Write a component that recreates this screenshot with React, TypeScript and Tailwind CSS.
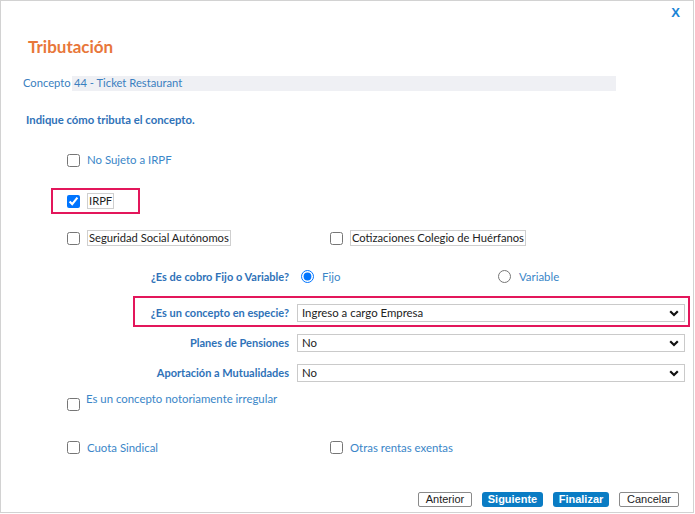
import React from "react";

const RED = "border-[#e3165b]";

function Chevron() {
  return (
    <svg
      width="10"
      height="7"
      viewBox="0 0 10 7"
      className="pointer-events-none absolute right-[6px] top-[6px]"
    >
      <path d="M1.2 1.2 L5 5 L8.8 1.2" stroke="#111" strokeWidth="2.2" fill="none" />
    </svg>
  );
}

function Select({ value }: { value: string }) {
  return (
    <div className="relative w-[388px] h-[18px] flex-none">
      <select
        defaultValue={value}
        className="block appearance-none w-full h-[18px] border border-[#cacaca] bg-white pl-[4px] py-0 text-[11.4px] leading-[16px] text-[#222] outline-none rounded-none"
      >
        <option>{value}</option>
      </select>
      <Chevron />
    </div>
  );
}

function Check({ checked = false }: { checked?: boolean }) {
  return (
    <input
      type="checkbox"
      defaultChecked={checked}
      className="m-0 w-[13px] h-[13px] flex-none"
    />
  );
}

function Radio({ checked = false }: { checked?: boolean }) {
  return (
    <input
      type="radio"
      name="fv"
      defaultChecked={checked}
      className="m-0 w-[13px] h-[13px] flex-none"
    />
  );
}

function BlueLabel({ children }: { children: React.ReactNode }) {
  return <span className="text-[11.4px] text-[#3a86c8] whitespace-nowrap">{children}</span>;
}

function BoxLabel({ children }: { children: React.ReactNode }) {
  return (
    <span className="text-[11.2px] leading-[14px] text-[#222] border border-[#cfcfcf] px-[1px] whitespace-nowrap">
      {children}
    </span>
  );
}

function QLabel({ children, w }: { children: React.ReactNode; w: string }) {
  return (
    <span
      className={`${w} flex-none text-right text-[11px] font-bold text-[#2f72b8] whitespace-nowrap`}
    >
      {children}
    </span>
  );
}

export default function App() {
  return (
    <div className="w-[695px] h-[514px] bg-white font-['Lato',sans-serif]">
      <div className="w-[694px] h-[513px] border border-[#d2d2d2] flex flex-col">
        {/* close */}
        <div className="h-[23px] flex items-center justify-end pr-[13px]">
          <span className="font-['Liberation_Sans',sans-serif] font-bold text-[13px] text-[#1b84d6]">
            X
          </span>
        </div>

        {/* title */}
        <div className="h-[46px] flex items-center pl-[27px]">
          <span className="text-[17px] font-bold text-[#e8773a]">Tributación</span>
        </div>

        {/* concepto */}
        <div className="mt-[6px] h-[15px] pl-[22px] flex">
          <div className="w-[593px] flex items-center text-[11.2px] text-[#3a7fc0]">
            <span className="w-[49px] flex-none whitespace-nowrap">Concepto</span>
            <div className="flex-1 h-full bg-[#eff0f4] flex items-center pl-[2px]">
              44 - Ticket Restaurant
            </div>
          </div>
        </div>

        {/* indique */}
        <div className="mt-[17px] h-[24px] flex items-center pl-[25px]">
          <span className="text-[11.3px] font-bold text-[#2f72b8]">
            Indique cómo tributa el concepto.
          </span>
        </div>

        {/* no sujeto */}
        <div className="mt-[16px] h-[24px] flex items-center pl-[66px] gap-[7px]">
          <Check />
          <BlueLabel>No Sujeto a IRPF</BlueLabel>
        </div>

        {/* IRPF */}
        <div className="mt-[16px] ml-[50px]">
          <div className={`w-[89px] h-[26px] border-2 ${RED} flex items-center pl-[14px] gap-[7px]`}>
            <Check checked />
            <BoxLabel>IRPF</BoxLabel>
          </div>
        </div>

        {/* seguridad */}
        <div className="mt-[12px] h-[24px] flex items-center pl-[66px]">
          <div className="w-[263px] flex items-center gap-[7px]">
            <Check />
            <BoxLabel>Seguridad Social Autónomos</BoxLabel>
          </div>
          <div className="flex items-center gap-[7px]">
            <Check />
            <BoxLabel>Cotizaciones Colegio de Huérfanos</BoxLabel>
          </div>
        </div>

        {/* fijo o variable */}
        <div className="mt-[15px] h-[24px] flex items-center">
          <QLabel w="w-[288px]">¿Es de cobro Fijo o Variable?</QLabel>
          <div className="ml-[12px] w-[197px] flex items-center gap-[8px]">
            <Radio checked />
            <BlueLabel>Fijo</BlueLabel>
          </div>
          <div className="flex items-center gap-[8px]">
            <Radio />
            <BlueLabel>Variable</BlueLabel>
          </div>
        </div>

        {/* especie */}
        <div className="mt-[7px] ml-[132px]">
          <div className={`w-[557px] h-[31px] border-2 ${RED} flex items-start pt-[6px]`}>
            <span className="w-[154px] flex-none text-right text-[11px] leading-[18px] font-bold text-[#2f72b8] whitespace-nowrap">
              ¿Es un concepto en especie?
            </span>
            <div className="ml-[8px]">
              <Select value="Ingreso a cargo Empresa" />
            </div>
          </div>
        </div>

        {/* planes */}
        <div className="mt-[7px] h-[18px] flex items-center">
          <QLabel w="w-[288px]">Planes de Pensiones</QLabel>
          <div className="ml-[8px]">
            <Select value="No" />
          </div>
        </div>

        {/* aportacion */}
        <div className="mt-[12px] h-[18px] flex items-center">
          <QLabel w="w-[288px]">Aportación a Mutualidades</QLabel>
          <div className="ml-[8px]">
            <Select value="No" />
          </div>
        </div>

        {/* irregular */}
        <div className="mt-[10px] h-[20px] flex items-start pl-[66px] gap-[6px]">
          <div className="mt-[6px] flex">
            <Check />
          </div>
          <span className="text-[11.4px] leading-[14px] text-[#3a86c8] whitespace-nowrap">
            Es un concepto notoriamente irregular
          </span>
        </div>

        {/* cuota */}
        <div className="mt-[24px] h-[24px] flex items-center pl-[66px]">
          <div className="w-[263px] flex items-center gap-[7px]">
            <Check />
            <BlueLabel>Cuota Sindical</BlueLabel>
          </div>
          <div className="flex items-center gap-[7px]">
            <Check />
            <BlueLabel>Otras rentas exentas</BlueLabel>
          </div>
        </div>

        {/* buttons */}
        <div className="mt-[32px] h-[15px] flex justify-end pr-[14px] gap-[10px] font-['Liberation_Sans',sans-serif] text-[11px]">
          <button className="w-[54px] h-[15px] border border-[#8a8a8a] bg-white text-[#222] leading-[13px] rounded-[2px]">
            Anterior
          </button>
          <button className="w-[61px] h-[15px] bg-[#0a7cc4] text-white font-bold leading-[15px] rounded-[3px]">
            Siguiente
          </button>
          <button className="w-[56px] h-[15px] bg-[#0a7cc4] text-white font-bold leading-[15px] rounded-[3px]">
            Finalizar
          </button>
          <button className="w-[60px] h-[15px] border border-[#8a8a8a] bg-white text-[#222] leading-[13px] rounded-[2px]">
            Cancelar
          </button>
        </div>
      </div>
    </div>
  );
}
